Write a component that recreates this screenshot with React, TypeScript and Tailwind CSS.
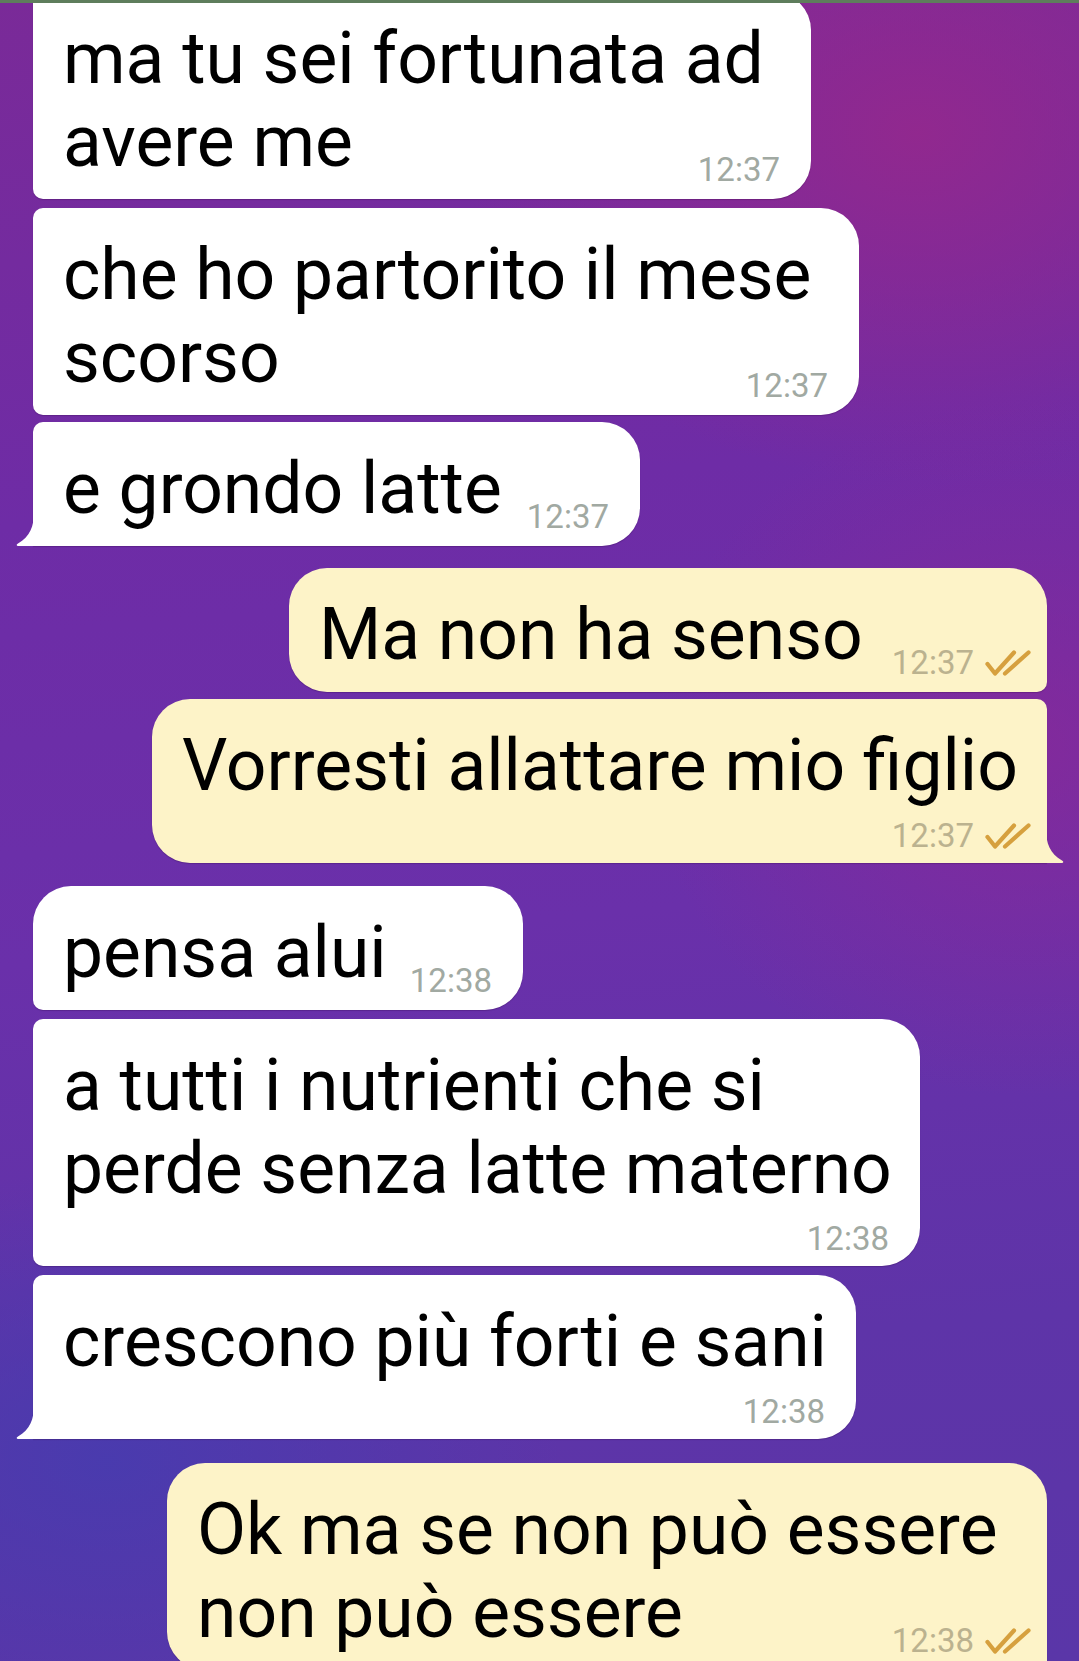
import React from 'react';

const Check = () => (
  <svg width="46" height="26" viewBox="0 0 46 26" fill="none" stroke="#d6a03e" strokeWidth="4.2" strokeLinecap="round" strokeLinejoin="round">
    <path d="M2.5 14 L10 23.5 L29 2.5" />
    <path d="M20 23.5 L43.5 2.5" />
  </svg>
);

const TailIn = () => (
  <svg className="absolute left-[-17px] bottom-0" width="18" height="34" viewBox="0 0 18 34">
    <path d="M18 0 C18 14 14 25 2 31.5 C0 32.6 0.6 34 2.4 34 L18 34 Z" fill="#ffffff" />
  </svg>
);

const TailOut = () => (
  <svg className="absolute right-[-17px] bottom-0" width="18" height="34" viewBox="0 0 18 34">
    <path d="M0 0 C0 14 4 25 16 31.5 C18 32.6 17.4 34 15.6 34 L0 34 Z" fill="#fdf3c8" />
  </svg>
);

type BubbleProps = {
  out?: boolean;
  cls: string;
  lines: string[];
  time: string;
  below?: boolean;
  tail?: boolean;
};

function Bubble({ out, cls, lines, time, below, tail }: BubbleProps) {
  const timeEl = (
    <div className="flex items-center gap-[11px]">
      <span className={`font-['Roboto'] text-[33px] leading-[33px] ${out ? 'text-[#bbb28f]' : 'text-[#a1a9a2]'}`}>{time}</span>
      {out ? <Check /> : null}
    </div>
  );
  return (
    <div
      className={`relative shrink-0 ${out ? 'self-end mr-[32px] bg-[#fdf3c8]' : 'self-start ml-[33px] bg-white'} shadow-[0_1px_1px_rgba(40,0,60,0.25)] ${cls}`}
    >
      <div className={`pt-[25px] pl-[30px] ${below ? '' : 'pb-[16px]'}`}>
        <div className="font-['Roboto'] text-[71.4px] leading-[83px] text-black whitespace-nowrap">
          {lines.map((l, i) => (
            <div key={i}>{l}</div>
          ))}
        </div>
      </div>
      {below ? (
        <div className={`flex justify-end mt-[12px] pb-[11px] ${out ? 'pr-[16px]' : 'pr-[31px]'}`}>{timeEl}</div>
      ) : (
        <div className={`absolute bottom-[13px] ${out ? 'right-[16px]' : 'right-[31px]'}`}>{timeEl}</div>
      )}
      {tail ? (out ? <TailOut /> : <TailIn />) : null}
    </div>
  );
}

export default function App() {
  return (
    <div className="w-[1079px] h-[1661px] overflow-hidden flex flex-col bg-[#6c2fa4] bg-[radial-gradient(ellipse_60%_30%_at_85%_8%,rgba(150,40,140,0.85),transparent_70%),radial-gradient(ellipse_50%_30%_at_95%_45%,rgba(140,40,150,0.7),transparent_70%),radial-gradient(ellipse_60%_25%_at_10%_88%,rgba(70,60,175,0.85),transparent_70%),linear-gradient(175deg,#7a2a98_0%,#6e2ca6_30%,#6a30aa_55%,#5e34a8_80%,#5a36a8_100%)]">
      <div className="h-[3px] shrink-0 bg-[#5e7d5c]" />
      <div className="flex-1 overflow-hidden flex flex-col">
        <div className="flex flex-col mt-[-11px]">
          <Bubble cls="w-[778px] rounded-tl-[10px] rounded-bl-[10px] rounded-r-[38px]" lines={['ma tu sei fortunata ad', 'avere me']} time="12:37" />
          <div className="h-[9px]" />
          <Bubble cls="w-[826px] rounded-l-[10px] rounded-r-[38px]" lines={['che ho partorito il mese', 'scorso']} time="12:37" />
          <div className="h-[7px]" />
          <Bubble cls="w-[607px] rounded-tl-[10px] rounded-r-[38px]" lines={['e grondo latte']} time="12:37" tail />
          <div className="h-[22px]" />
          <Bubble out cls="w-[758px] rounded-l-[38px] rounded-tr-[38px] rounded-br-[10px]" lines={['Ma non ha senso']} time="12:37" />
          <div className="h-[7px]" />
          <Bubble out cls="w-[895px] rounded-l-[38px] rounded-tr-[10px]" lines={['Vorresti allattare mio figlio']} time="12:37" below tail />
          <div className="h-[23px]" />
          <Bubble cls="w-[490px] rounded-tl-[38px] rounded-bl-[10px] rounded-r-[38px]" lines={['pensa alui']} time="12:38" />
          <div className="h-[9px]" />
          <Bubble cls="w-[887px] rounded-l-[10px] rounded-r-[38px]" lines={['a tutti i nutrienti che si', 'perde senza latte materno']} time="12:38" below />
          <div className="h-[9px]" />
          <Bubble cls="w-[823px] rounded-tl-[10px] rounded-r-[38px]" lines={['crescono più forti e sani']} time="12:38" below tail />
          <div className="h-[24px]" />
          <Bubble out cls="w-[880px] rounded-l-[38px] rounded-tr-[38px] rounded-br-[10px]" lines={['Ok ma se non può essere', 'non può essere']} time="12:38" />
        </div>
      </div>
    </div>
  );
}
